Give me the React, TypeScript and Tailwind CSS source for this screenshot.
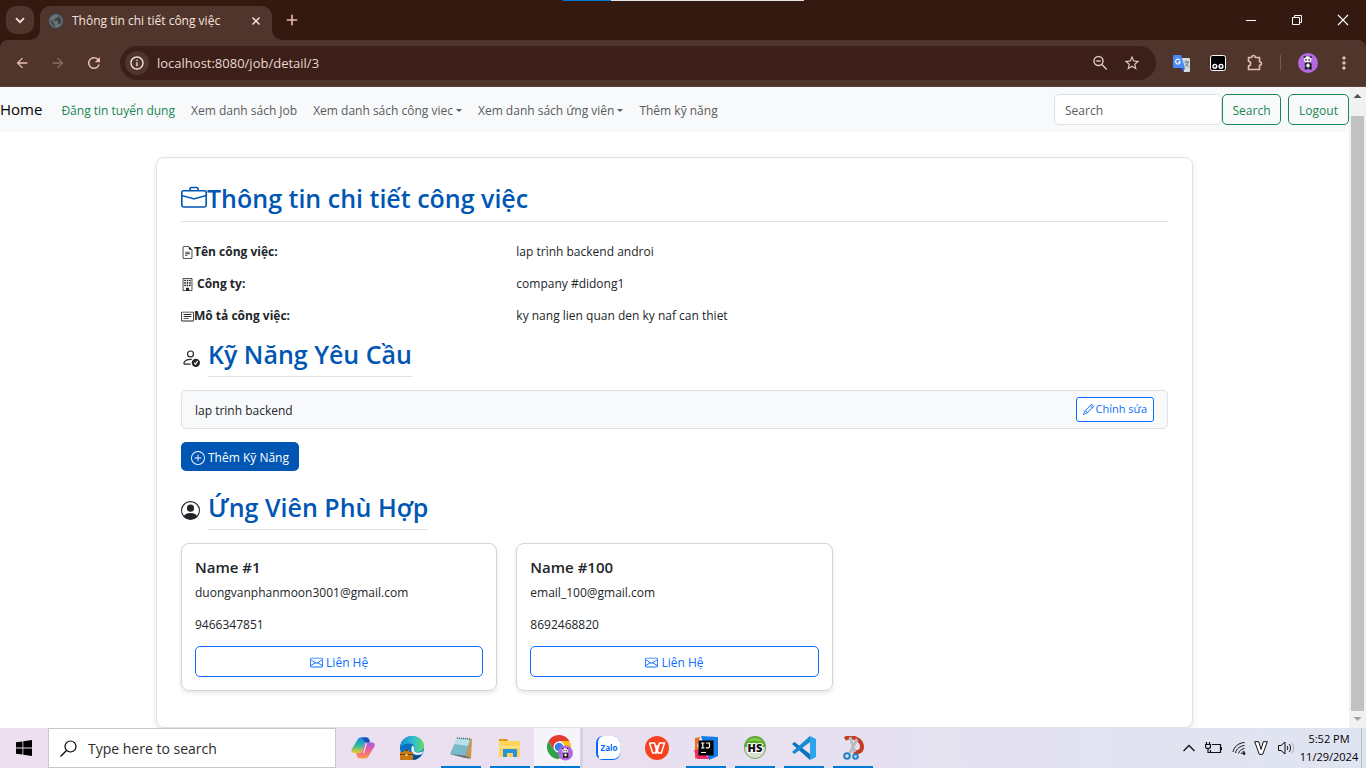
import React from "react";
import {
  BsBriefcase,
  BsBuilding,
  BsCardText,
  BsEnvelope,
  BsFileEarmarkText,
  BsPencil,
  BsPersonCheck,
  BsPersonCircle,
  BsPlusCircle,
} from "react-icons/bs";
import {
  MdArrowBack,
  MdArrowForward,
  MdInfoOutline,
  MdMoreVert,
  MdPublic,
  MdRefresh,
  MdStarBorder,
} from "react-icons/md";

const PandaFace = () => (
  <>
    <circle cx="10" cy="10" r="10" fill="#b569e0" />
    <ellipse cx="9.6" cy="6.500" rx="3.800" ry="3" fill="#f3f3f3" />
    <circle cx="6.600" cy="4" r="1.100" fill="#222" />
    <circle cx="12.800" cy="4" r="1.100" fill="#222" />
    <circle cx="8" cy="6.800" r=".9" fill="#222" />
    <circle cx="11.200" cy="6.800" r=".9" fill="#222" />
    <path d="M6.500 10.500 8 9.500h4l2 1.500-.5 2 .5 3.500h-3l-.5-1.500-1 1.500h-3l.5-3z" fill="#222" />
    <ellipse cx="10" cy="12.500" rx="1.700" ry="1.900" fill="#f3f3f3" />
  </>
);

function TabStrip() {
  return (
    <div className="relative flex h-10 shrink-0 items-end bg-[#341911]">
      <div className="absolute left-[563px] top-0 flex h-px w-[241px]">
        <span className="w-12 bg-[#0078d7]" />
        <span className="flex-1 bg-[#e5e2e0]" />
      </div>
      <button aria-label="Search tabs" className="mb-1.5 ml-1.5 flex size-7 items-center justify-center rounded-[10px] bg-[#50352d]">
        <svg viewBox="0 0 28 28" className="size-7" fill="none" stroke="#f5e3de" strokeWidth="1.8">
          <path d="m10 12.200 4 4 4-4" />
        </svg>
      </button>
      <svg viewBox="0 0 10 10" className="-ml-1 size-2.5 text-[#50352d]" fill="currentColor">
        <path d="M10 0v10H0A10 10 0 0 0 10 0z" />
      </svg>
      <div className="flex h-[34px] w-[232px] items-center rounded-t-[10px] bg-[#50352d] pb-1 pl-2 pr-2.5">
        <MdPublic className="size-4 shrink-0 rounded-full bg-[#3f4447] text-[#6b7377]" />
        <span className="ml-2 flex-1 whitespace-nowrap text-xs text-[#f5e3de]">Thông tin chi tiết công việc</span>
        <button aria-label="Close tab">
          <svg viewBox="0 0 12 12" className="size-3" stroke="#f5e3de" strokeWidth="1.500">
            <path d="m2.500 2.500 7 7m0-7-7 7" />
          </svg>
        </button>
      </div>
      <svg viewBox="0 0 10 10" className="size-2.5 text-[#50352d]" fill="currentColor">
        <path d="M0 0v10h10A10 10 0 0 1 0 0z" />
      </svg>
      <button aria-label="New tab" className="mb-3.5 ml-1">
        <svg viewBox="0 0 12 12" className="size-3" stroke="#e7bdb2" strokeWidth="1.600">
          <path d="M6 .8v10.400M.8 6h10.400" />
        </svg>
      </button>
      <div className="ml-auto flex h-10 text-white">
        <button aria-label="Minimize" className="flex w-[46px] items-center justify-center">
          <span className="h-px w-2.5 bg-white" />
        </button>
        <button aria-label="Restore" className="flex w-[46px] items-center justify-center">
          <svg viewBox="0 0 12 12" className="size-3" fill="none" stroke="currentColor">
            <path d="M1.500 3.500h7v7h-7zM3.500 3.500v-2h7v7h-2" />
          </svg>
        </button>
        <button aria-label="Close" className="flex w-[46px] items-center justify-center">
          <svg viewBox="0 0 12 12" className="size-3" fill="none" stroke="currentColor" strokeWidth="1.100">
            <path d="m1 1 10 10m0-10L1 11" />
          </svg>
        </button>
      </div>
    </div>
  );
}

function Toolbar() {
  return (
    <div className="shrink-0 bg-[#341911]">
      <div className="flex h-[47px] items-center rounded-t-lg border-b border-[#5d443d] bg-[#50352d] pl-3.5 pr-3 text-[#e7bdb2]">
        <button aria-label="Back"><MdArrowBack className="size-4" /></button>
        <button aria-label="Forward" className="ml-5 text-[#8c6d64]"><MdArrowForward className="size-4" /></button>
        <button aria-label="Reload" className="ml-[19px]"><MdRefresh className="size-[18px]" /></button>
        <div className="ml-[17px] flex h-[34px] flex-1 items-center rounded-full bg-[#3b1f18] pl-[5px] pr-[15px]">
          <span className="flex size-6 items-center justify-center rounded-full bg-[#50352d] text-[#f5e3de]">
            <MdInfoOutline className="size-4" />
          </span>
          <input
            aria-label="Address"
            defaultValue="localhost:8080/job/detail/3"
            className="ml-2 min-w-0 flex-1 bg-transparent pt-0.5 text-[13px] text-[#e9d8d3] outline-none"
          />
          <svg viewBox="0 0 16 16" className="size-4" fill="none" stroke="#dcc3bc" strokeWidth="1.500">
            <circle cx="6.500" cy="6" r="4.500" />
            <path d="m9.700 9.200 5 5.300M4.300 6h4.400" />
          </svg>
          <MdStarBorder className="ml-[15px] size-[18px] text-[#dcc3bc]" />
        </div>
        <svg viewBox="0 0 17 17" className="ml-[17px] size-[17px]">
          <path d="M7 3h9a1 1 0 0 1 1 1v12a1 1 0 0 1-1 1h-5z" fill="#d7dbdf" />
          <path d="M1 0h7l4 13H1a1 1 0 0 1-1-1V1a1 1 0 0 1 1-1z" fill="#4a8af4" />
          <path d="m8 13h4l-2 4z" fill="#2f5fc4" />
          <path d="M7 5.300A2.400 2.400 0 1 0 7.300 7H5" fill="none" stroke="#fff" strokeWidth="1.100" />
          <path d="M11.500 7H16m-2.300-1.500V7m1.600 0c-.5 2-2 3.500-3 4m.5-2.500 3 4" fill="none" stroke="#61767f" />
        </svg>
        <svg viewBox="0 0 16 16" className="ml-5 size-4">
          <rect x=".5" y=".5" width="15" height="15" rx="2" fill="#000" stroke="#fff" />
          <circle cx="4.800" cy="11.300" r="1.900" fill="#222" stroke="#fff" strokeWidth="1.400" />
          <circle cx="11" cy="11.300" r="1.900" fill="#222" stroke="#fff" strokeWidth="1.400" />
        </svg>
        <svg viewBox="0 0 18 18" className="ml-5 size-[18px]" fill="none" stroke="currentColor" strokeWidth="1.600" strokeLinejoin="round">
          <path d="M2.500 3.500h3.300c0-2.600 3.400-2.600 3.400 0h4.300v4.300c2.600 0 2.600 3.400 0 3.400v4.300h-11v-3.700c2.800 0 2.800-4.600 0-4.600z" />
        </svg>
        <span className="ml-4 h-4 w-px bg-[#7a574e]" />
        <svg viewBox="0 0 20 20" className="ml-[17px] size-5"><PandaFace /></svg>
        <MdMoreVert className="ml-4 size-5" />
      </div>
    </div>
  );
}

const Caret = () => (
  <svg viewBox="0 0 8 4" className="ml-[3px] h-[3px] w-1.5" fill="currentColor"><path d="M0 0h8L4 4z" /></svg>
);

function Navbar() {
  return (
    <nav className="flex h-[45px] items-center bg-[#f8f9fa] text-xs text-[#595b5d]">
      <div className="flex items-baseline gap-[19px] whitespace-nowrap pb-0.5">
        <a href="#home" className="text-[15px] text-black">Home</a>
        <div className="flex items-baseline gap-4">
          <a href="#post" className="text-[#198754]">Đăng tin tuyển dụng</a>
          <a href="#jobs">Xem danh sách Job</a>
          <button className="flex items-center">Xem danh sách công viec<Caret /></button>
          <button className="flex items-center">Xem danh sách ứng viên<Caret /></button>
          <a href="#skills">Thêm kỹ năng</a>
        </div>
      </div>
      <form className="ml-auto flex" onSubmit={(e) => e.preventDefault()}>
        <input
          aria-label="Search"
          placeholder="Search"
          className="h-[31px] w-[168px] rounded-[5px] border border-[#dee2e6] bg-white px-2.5 pt-0.5 placeholder:text-[#595c5f]"
        />
        <button className="h-[31px] w-[59px] rounded-[5px] border border-[#198754] pt-0.5 text-[#198754]">Search</button>
      </form>
      <button className="ml-[7px] h-[31px] w-[61px] rounded-[5px] border border-[#198754] pt-0.5 text-[#198754]">Logout</button>
    </nav>
  );
}

const details = [
  { icon: <BsFileEarmarkText className="size-[13px]" />, label: "Tên công việc:", value: "lap trình backend androi" },
  { icon: <BsBuilding className="mr-[3px] size-[13px]" />, label: "Công ty:", value: "company #didong1" },
  { icon: <BsCardText className="size-[13px]" />, label: "Mô tả công việc:", value: "ky nang lien quan den ky naf can thiet" },
];

const candidates = [
  { name: "Name #1", email: "duongvanphanmoon3001@gmail.com", phone: "9466347851" },
  { name: "Name #100", email: "email_100@gmail.com", phone: "8692468820" },
];

function SectionTitle({ icon, children }: { icon: React.ReactNode; children: React.ReactNode }) {
  return (
    <div className="flex items-center gap-2">
      {icon}
      <h2 className="border-b border-[#dee2e6] pb-1.5 text-[25px] font-semibold leading-8 text-[#0056b3]">{children}</h2>
    </div>
  );
}

function JobCard() {
  return (
    <main className="mx-auto mt-[25px] max-w-[1037px] rounded-lg border border-[#dee2e6] bg-white px-6 pb-9 pt-6 text-xs text-[#212529] shadow-[0_3px_6px_rgba(0,0,0,0.1)]">
      <h1 className="flex items-center border-b border-[#dee2e6] pb-[7px] text-[25px] font-semibold leading-8 text-[#0056b3]">
        <BsBriefcase className="size-[26px]" />
        Thông tin chi tiết công việc
      </h1>
      <dl className="mt-5 flex flex-col gap-3 leading-5">
        {details.map((d) => (
          <div key={d.label} className="grid grid-cols-3 gap-x-[19px]">
            <dt className="flex items-center font-bold">{d.icon}{d.label}</dt>
            <dd className="col-span-2">{d.value}</dd>
          </div>
        ))}
      </dl>
      <section className="mt-3">
        <SectionTitle icon={<BsPersonCheck className="size-[19px]" />}>Kỹ Năng Yêu Cầu</SectionTitle>
        <ul className="mt-[13px]">
          <li className="flex h-[39px] items-center justify-between rounded-[5px] border border-[#dee2e6] bg-[#f8f9fa] px-[13px]">
            <span className="pt-0.5">lap trinh backend</span>
            <button className="flex h-[25px] items-center gap-0.5 rounded-[3px] border border-[#0d6efd] bg-white px-1.5 text-[11px] text-[#0d6efd]">
              <BsPencil className="size-[11px]" />Chỉnh sửa
            </button>
          </li>
        </ul>
        <button className="mt-[13px] flex h-[29px] items-center gap-[3px] rounded-[5px] bg-[#0056b3] px-2.5 pt-0.5 text-white">
          <BsPlusCircle className="size-3.5" />Thêm Kỹ Năng
        </button>
      </section>
      <section className="mt-5">
        <SectionTitle icon={<BsPersonCircle className="size-[19px]" />}>Ứng Viên Phù Hợp</SectionTitle>
        <div className="mt-[13px] grid grid-cols-3 gap-x-[19px]">
          {candidates.map((c) => (
            <article key={c.name} className="rounded-lg border border-[#d3d4d5] p-[13px] leading-5 shadow-[0_2px_4px_rgba(0,0,0,0.1)]">
              <h3 className="mb-1.5 text-[15px] font-semibold leading-5">{c.name}</h3>
              <p className="mb-3">{c.email}</p>
              <p className="mb-[11px]">{c.phone}</p>
              <button className="flex h-[31px] w-full items-center justify-center gap-[3px] rounded-[5px] border border-[#0d6efd] pt-0.5 text-[#0d6efd]">
                <BsEnvelope className="size-[13px]" />Liên Hệ
              </button>
            </article>
          ))}
        </div>
      </section>
    </main>
  );
}

function Scrollbar() {
  return (
    <div aria-hidden="true" className="flex w-[17px] shrink-0 flex-col items-center bg-[#f1f1f1]">
      <svg viewBox="0 0 17 29" className="h-[29px] w-[17px]"><path d="m4.500 11 4-4 4 4z" fill="#505050" /></svg>
      <div className="w-[13px] flex-1 bg-[#c1c1c1]" />
      <svg viewBox="0 0 17 17" className="size-[17px]"><path d="m4.500 6 4 4 4-4z" fill="#a3a3a3" /></svg>
    </div>
  );
}

const I = ({ children }: { children: React.ReactNode }) => (
  <svg viewBox="0 0 24 24" className="size-6">{children}</svg>
);

const apps = [
  {
    name: "Copilot", state: "idle", icon: (
      <I>
        <defs>
          <linearGradient id="cpA" x1="0" y1="0" x2="0" y2="1"><stop offset="0" stopColor="#1689e8" /><stop offset=".5" stopColor="#28b8a6" /><stop offset="1" stopColor="#f5cc20" /></linearGradient>
          <linearGradient id="cpB" x1="0" y1="0" x2="0" y2="1"><stop offset="0" stopColor="#a05ce8" /><stop offset=".5" stopColor="#f05f91" /><stop offset="1" stopColor="#ff9b50" /></linearGradient>
        </defs>
        <path d="M7 3c.6-1 1.500-1.500 3-1.500h5.500c1.500 0 2.300 1 2.700 2.300l.8 2.700h-3c-2 0-2.600 1-3.200 3l-1.500 5c-.5 1.500-1.500 2.500-3 2.500H3C1 17 0 15.500.5 13.500z" fill="url(#cpA)" />
        <path d="M10 1.500h5.500c1.500 0 2.300 1 2.700 2.300l.8 2.700h-4c-2 0-2.500-4-5-5z" fill="#174fbd" />
        <path d="M17 21c-.6 1-1.500 1.500-3 1.500H9c-1.500 0-2.500-1-3-2.500l-.8-3H8c2 0 3-1 3.600-3l1.400-5c.5-1.500 1.500-2.500 3-2.500h5c2.300 0 3.200 1.500 2.700 3.500z" fill="url(#cpB)" />
        <path d="M12.600 17 15.500 7" stroke="#f4e6f2" strokeWidth="1.200" />
      </I>
    ),
  },
  {
    name: "Edge", state: "idle", icon: (
      <I>
        <defs><linearGradient id="edG"><stop offset="0" stopColor="#168bd8" /><stop offset=".55" stopColor="#31bdd3" /><stop offset="1" stopColor="#63dc61" /></linearGradient></defs>
        <circle cx="12" cy="12" r="12" fill="#0d6fbd" />
        <path d="M0 11C1 4 6 0 12 0c7 0 12 4.500 12 10 0 4-3 6-6.500 6-3 0-4.500-1.500-3.500-3 1.500-3-1-5.500-4.500-5.500C5 7.500 2 9 0 11z" fill="url(#edG)" />
        <path d="M12 10c3 0 2 2 2 3-1 2 2 4 5 3.500 2-.3 3.500-1 4.500-1.500l-2 3.500-5 .5c-4-1-6.500-4-4.500-9z" fill="#eaf4fb" />
        <path d="M12 18c4 3 8 1 10 .5-2 3.500-6 5.500-10 5.500z" fill="#0c4d8d" />
        <path d="M4 16v-2h5v2h4v8H0v-8z" fill="#c77a16" /><path d="M0 18.500h13M5 14.500h3" stroke="#6e3d05" strokeWidth="1.200" /><rect x="5.500" y="18" width="2" height="2" fill="#ffd35c" />
      </I>
    ),
  },
  {
    name: "Notepad", state: "open", icon: (
      <I>
        <path d="m9 2 14 1-1 19-3 1z" fill="#c29a54" /><path d="m8 2 13 1-5 19L1 18z" fill="#79b9c9" /><path d="m8 2 13 1-2 7L5 8z" fill="#b9e0e8" /><path d="m1 18 15 4 6 .5-5-3z" fill="#6b7376" /><path d="m8 2 13 1" stroke="#566" strokeWidth="1.500" strokeDasharray="1 1" />
      </I>
    ),
  },
  {
    name: "File Explorer", state: "open", icon: (
      <I>
        <path d="M1 3h8l2 3H1z" fill="#dc9c18" /><path d="M1 5h21v16H1z" fill="#ffd45c" /><path d="M1 10h21v2H1z" fill="#ffe186" /><path d="M5 13h14v8h-4v-4H9v4H5z" fill="#2793dc" />
      </I>
    ),
  },
  {
    name: "Chrome", state: "active", icon: (
      <svg viewBox="0 0 26 26" className="size-[26px]">
        <path d="M1.600 6A12 12 0 0 0 12 24l5-9-5-3-5 3z" fill="#2da14c" /><path d="M22.400 6A12 12 0 0 1 12 24l5.200-9L14 6z" fill="#fbc116" /><path d="M1.600 6 7 15l5-9h10.400A12 12 0 0 0 1.600 6z" fill="#e33b2e" />
        <circle cx="12" cy="12" r="5.500" fill="#fff" /><circle cx="12" cy="12" r="4.300" fill="#3c7de8" />
        <g transform="translate(11 10.500) scale(.75)"><PandaFace /></g>
      </svg>
    ),
  },
  {
    name: "Zalo", state: "idle", icon: (
      <I>
        <rect width="24" height="24" rx="7" fill="#0068ff" /><path d="M8 0h9a7 7 0 0 1 7 7v9a7 7 0 0 1-7 7H7c-2 0-4 0-5-1 2-1 1-2 0-3V7c0-4 2-7 6-7z" fill="#fff" />
        <text x="13" y="14.500" textAnchor="middle" fontSize="8" fontWeight="700" fill="#0068ff">Zalo</text>
      </I>
    ),
  },
  {
    name: "WPS Office", state: "idle", icon: (
      <I><circle cx="12" cy="12" r="12" fill="#f8421f" /><path d="M4.500 7h5l2.500 9 2.500-9h5l-3.200 10h-2.800L10.500 9M4.500 7l3.200 10h2.800L13 9" fill="none" stroke="#fff" strokeWidth="1.500" /></I>
    ),
  },
  {
    name: "IntelliJ IDEA", state: "open", icon: (
      <I><path d="m1 2 5-1-3 9 5 9-7 4z" fill="#f36b22" /><path d="m7 0 17 1v19l-9 4z" fill="#167ce8" /><path d="M0 14h6l10 9H3z" fill="#ef2a68" /><rect x="4.500" y="4.500" width="15" height="15" fill="#000" /><path d="M7 7h3.500M8.800 7v5M7 12h3.500M12 7h3.500v3.500c0 1.500-2 2-3.500 1M7 16.500h5" fill="none" stroke="#fff" strokeWidth="1.200" /></I>
    ),
  },
  {
    name: "HeidiSQL", state: "open", icon: (
      <I><circle cx="12" cy="12" r="11" fill="#d8dfd3" /><path d="M1 11a11 11 0 0 1 22 0z" fill="#58ad22" /><path d="M4 6c4-5 12-5 16 0-4-2-12-2-16 0z" fill="#8ed252" /><circle cx="12" cy="12" r="10.500" fill="none" stroke="#7ba365" /><text x="12" y="16" textAnchor="middle" fontSize="11" fontWeight="800" fill="#111" stroke="#fff" strokeWidth="2" paintOrder="stroke">HS</text></I>
    ),
  },
  {
    name: "Visual Studio Code", state: "open", icon: (
      <I><path d="M18 0 24 3v18l-6 3z" fill="#2ba5ec" /><path d="m0 8 2.500-2L18 18v6L0 8z" fill="#0b72bd" /><path d="M0 16 18 0v6L2.500 18z" fill="#168bd5" /></I>
    ),
  },
  {
    name: "Snipping Tool", state: "open", icon: (
      <I><path d="M4 3c6-4 17 0 17 8 0 5-5 6-8 4.500" fill="none" stroke="#c53a20" strokeWidth="4" /><path d="m9 1 5 15M16 3 9 17" stroke="#b7bdc3" strokeWidth="2.800" /><circle cx="6" cy="20" r="2.800" fill="none" stroke="#2280c5" strokeWidth="2" /><circle cx="14.500" cy="20.500" r="2.300" fill="none" stroke="#2280c5" strokeWidth="2" /></I>
    ),
  },
];

function Taskbar() {
  return (
    <footer className="flex h-10 shrink-0 bg-linear-to-r from-[#eedff0] via-[#e8e0f0] to-[#dfe4f1] text-black">
      <button aria-label="Start" className="flex w-12 items-center justify-center">
        <svg viewBox="0 0 16 16" className="size-4"><path d="m0 2.300 6.500-.9v6.200H0zM7.300 1.300 16 0v7.600H7.300zM0 8.400h6.500v6.200L0 13.700zM7.300 8.400H16V16l-8.700-1.300z" /></svg>
      </button>
      <label className="flex w-72 items-center border border-[#c8c8cb] bg-white pl-[11px]">
        <svg viewBox="0 0 17 17" className="size-[17px]" fill="none" stroke="#000" strokeWidth="1.200"><circle cx="10.500" cy="6.500" r="5.500" /><path d="M6.500 10.500.5 16.500" /></svg>
        <input aria-label="Type here to search" placeholder="Type here to search" className="ml-[11px] min-w-0 flex-1 bg-transparent pt-0.5 text-sm outline-none placeholder:text-[#2b2b2b]" />
      </label>
      <div className="ml-0.5 flex">
        {apps.map((a) => (
          <button
            key={a.name}
            aria-label={a.name}
            className={
              a.state === "active"
                ? "flex w-[49px] flex-col items-center border-r-[3px] border-[#d5d3e0] bg-[#f7f3fa]"
                : "flex w-[49px] flex-col items-center"
            }
          >
            <span className={a.state === "active" ? "flex flex-1 items-center pl-1.5 pt-0.5" : "flex flex-1 items-center pt-0.5"}>
              {a.icon}
            </span>
            <span
              className={
                a.state === "active" ? "h-0.5 w-full bg-[#0078d7]" : a.state === "open" ? "h-0.5 w-10 bg-[#0078d7]" : "h-0.5 w-10"
              }
            />
          </button>
        ))}
      </div>
      <div className="ml-auto flex items-center">
        <svg viewBox="0 0 12 12" className="size-3" fill="none" stroke="#111" strokeWidth="1.300"><path d="m.5 9 5.500-5.500L11.500 9" /></svg>
        <svg viewBox="0 0 17 14" className="ml-2.5 h-3.5 w-[17px]" fill="none" stroke="#111" strokeWidth="1.200"><path d="M7 3.500h8.500v8H5.500V9M16.500 6v3M1.500 1v2M4.500 1v2M.5 3.500h5v2c0 1.500-1 2-2.500 2s-2.500-.5-2.500-2zM3 7.500v4h2.500" /></svg>
        <svg viewBox="0 0 14 14" className="ml-2.5 size-3.5" fill="none" stroke="#111"><path d="M1 11C2 6 6 2 12.500 1.500M3.500 12C4 8 8 5 12.500 4.500M6.500 12.500c.5-2.500 3-4.500 6-5M9 13c.5-1.500 2-2.500 3.500-2.500" /><circle cx="12" cy="12.500" r="1" fill="#111" /></svg>
        <svg viewBox="0 0 14 14" className="ml-2 size-3.5" fill="#fff" stroke="#111"><path d="M.7.7h4L7 8.500 9.300.7h4L8.700 13.300H5.300z" /></svg>
        <svg viewBox="0 0 17 14" className="ml-2.5 h-3.5 w-[17px]" fill="none" stroke="#111"><path d="M.5 4.500H3l4-3.500v12L3 9.500H.5zM9 5c1 1 1 3 0 4M11 3c2 2 2 6 0 8" /><path d="M13.500 1.500c3 3 3 8 0 11" stroke="#aaa" /></svg>
        <div className="ml-0.5 flex w-16 flex-col items-center whitespace-nowrap text-[11px] leading-[18px]">
          <span>5:52 PM</span>
          <span>11/29/2024</span>
        </div>
        <span className="mr-1 h-10 w-px bg-[#b9bcc9]" />
      </div>
    </footer>
  );
}

export default function App() {
  return (
    <div className="flex h-screen flex-col overflow-hidden bg-white font-['Open_Sans','Noto_Sans',sans-serif]">
      <TabStrip />
      <Toolbar />
      <div className="flex min-h-0 flex-1">
        <div className="min-w-0 flex-1 overflow-hidden">
          <Navbar />
          <JobCard />
        </div>
        <Scrollbar />
      </div>
      <Taskbar />
    </div>
  );
}
